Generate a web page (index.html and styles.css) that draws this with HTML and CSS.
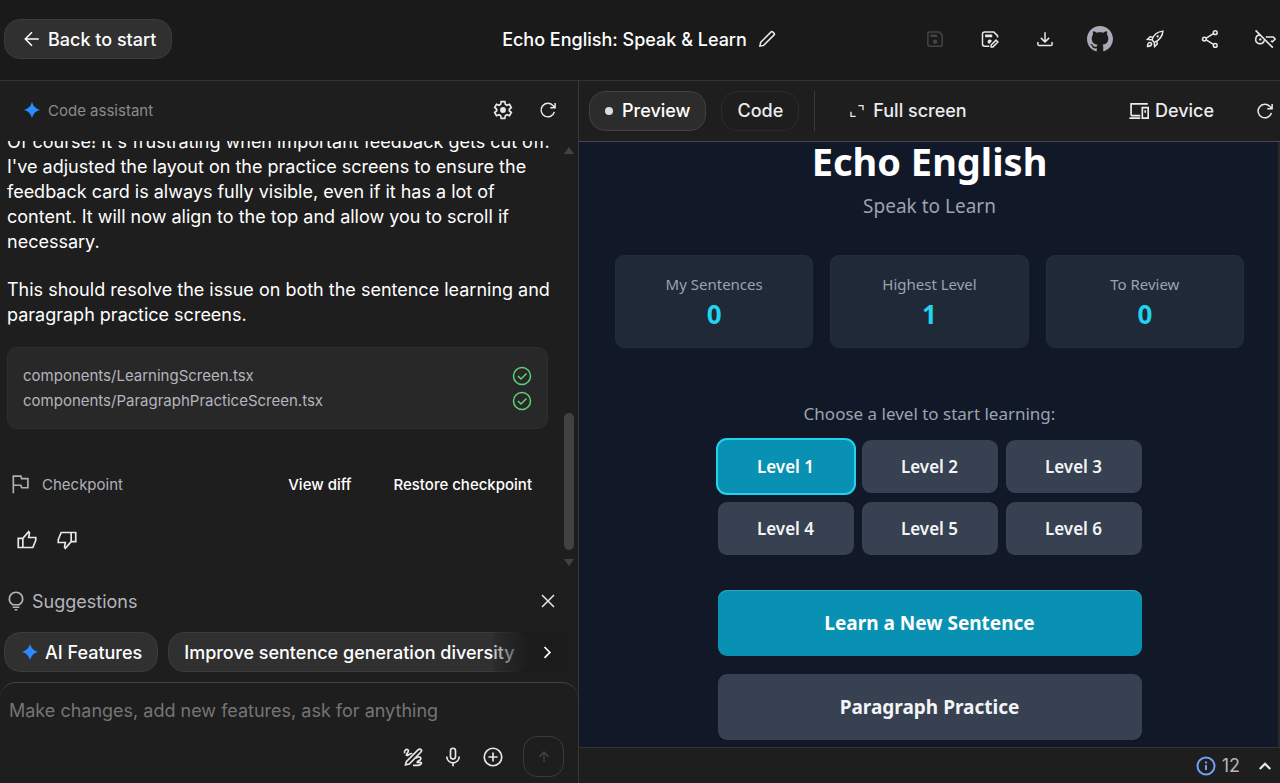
FILE: index.html
```html
<!DOCTYPE html>
<html lang="en">
<head>
    <meta charset="UTF-8">
    <meta name="viewport" content="width=device-width, initial-scale=1.0">
    <title>Echo English: Speak &amp; Learn</title>
    <link rel="stylesheet" href="styles.css">
</head>
<body>

<header class="topbar">
    <div>
        <button class="pill back" type="button">
            <svg class="icon" viewBox="0 0 24 24"><path d="M21 12H3.500M12 3l-9 9 9 9"/></svg>
            Back to start
        </button>
    </div>
    <div class="project">
        <h1>Echo English: Speak &amp; Learn</h1>
        <button class="icon-btn" type="button" aria-label="Edit name">
            <svg class="icon" viewBox="0 0 24 24"><path d="M2.500 21.500l1-5L17.500 2.500q1-1 2 0l2 2q1 1 0 2L7.500 20.500z"/></svg>
        </button>
    </div>
    <nav class="actions">
        <button class="icon-btn" type="button" aria-label="Save" disabled>
            <svg class="icon" viewBox="0 0 24 24"><path d="M5 2.500h12.500l4 4V19q0 2.500-2.500 2.500H5Q2.500 21.500 2.500 19V5Q2.500 2.500 5 2.500z"/><path class="fill" d="M6 6h9v3.500H6z"/><circle class="fill" cx="12" cy="15.500" r="3"/></svg>
        </button>
        <button class="icon-btn" type="button" aria-label="Save as">
            <svg class="icon" viewBox="0 0 24 24"><path d="M11 21.500H5Q2 21.500 2 19V5Q2 2.500 5 2.500h12l5 5V10"/><path class="fill" d="M5.500 6h9.500v3.500H5.500zM14.500 14.500a3 3 0 1 0-3.500 4z"/><path d="M13.500 22.500v-2.500l6.500-6.500 2.500 2.500-6.500 6.500z"/></svg>
        </button>
        <button class="icon-btn" type="button" aria-label="Download">
            <svg class="icon" viewBox="0 0 24 24"><path d="M12 3v12.500M6.500 10.500l5.500 5.500 5.500-5.500M2.500 16v3q0 1.800 1.800 1.800h15.400q1.800 0 1.800-1.800v-3"/></svg>
        </button>
        <button class="icon-btn github" type="button" aria-label="GitHub">
            <svg viewBox="0 0 16 16"><path d="M8 0C3.580 0 0 3.580 0 8c0 3.540 2.290 6.530 5.470 7.590.4.070.55-.17.55-.38 0-.19-.01-.82-.01-1.490-2.010.37-2.530-.49-2.690-.94-.09-.23-.48-.94-.82-1.130-.28-.15-.68-.52-.01-.53.63-.01 1.080.58 1.230.82.72 1.210 1.870.87 2.330.66.07-.52.28-.87.51-1.070-1.780-.2-3.640-.89-3.640-3.950 0-.87.31-1.590.82-2.150-.08-.2-.36-1.020.08-2.120 0 0 .67-.21 2.200.82.64-.18 1.320-.27 2-.27s1.360.09 2 .27c1.530-1.040 2.200-.82 2.200-.82.44 1.100.16 1.920.08 2.120.51.56.82 1.270.82 2.150 0 3.070-1.870 3.750-3.650 3.950.29.25.54.73.54 1.480 0 1.070-.01 1.930-.01 2.200 0 .21.15.46.55.38A8.010 8.010 0 0 0 16 8c0-4.420-3.580-8-8-8z"/></svg>
        </button>
        <button class="icon-btn" type="button" aria-label="Deploy">
            <svg class="icon" viewBox="0 0 24 24"><path d="M8 13C10 7 14 2.500 22.500 1.500 22 10 17 14 11 16.500zM9 9.500L5.500 9 2 12.500l6 .5M14.500 15l.5 3.500-3.500 3.500-.5-5.500"/><path d="M2 22q0-5 3-5.500 2.500 0 2.500 2.500Q7 21.500 2 22z"/><circle class="fill" cx="15.500" cy="8.500" r="1.500"/></svg>
        </button>
        <button class="icon-btn" type="button" aria-label="Share">
            <svg class="icon" viewBox="0 0 24 24"><path d="M7 10.800l9.500-6M7 13.200l9.500 6"/><circle cx="4.500" cy="12" r="2.500"/><circle cx="19" cy="3.500" r="2.500"/><circle cx="19" cy="20.500" r="2.500"/></svg>
        </button>
        <button class="icon-btn" type="button" aria-label="No API key">
            <svg class="icon key" viewBox="0 0 28 24"><path d="M2 1l22 22M8 7a5.500 5.500 0 1 0 5 7M15 9.500h9.500l2.500 2.500-3.500 3.500-2-1"/><circle class="fill" cx="8" cy="12.500" r="1.500"/></svg>
        </button>
    </nav>
</header>

<div class="workspace">
    <section class="assistant">
        <div class="assistant-head">
            <svg class="spark" viewBox="0 0 24 24"><path d="M12 0q2.500 9.500 12 12-9.500 2.500-12 12-2.500-9.500-12-12 9.500-2.500 12-12z"/></svg>
            <h2>Code assistant</h2>
            <button class="icon-btn" type="button" aria-label="Settings">
                <svg class="icon gear" viewBox="0 0 24 24"><path d="M9.800 2h4.400l.6 3.200 2 1.100 3-1.100 2.200 3.800-2.400 2.100v1.800l2.400 2.100-2.200 3.800-3-1.100-2 1.100-.6 3.200H9.800l-.6-3.200-2-1.100-3 1.100L2 15l2.400-2.100v-1.800L2 9l2.200-3.800 3 1.100 2-1.100z"/><circle class="fill" cx="12" cy="12" r="3.500"/></svg>
            </button>
            <button class="icon-btn" type="button" aria-label="Restart chat">
                <svg class="icon" viewBox="0 0 24 24"><path d="M20.500 14.500A9 9 0 1 1 18.500 6L21 8.500M21.500 2.500v6.500H15"/></svg>
            </button>
        </div>

        <div class="chat">
            <div class="messages">
                <p>Of course! It's frustrating when important feedback gets cut off. I've adjusted the layout on the practice screens to ensure the feedback card is always fully visible, even if it has a lot of content. It will now align to the top and allow you to scroll if necessary.</p>
                <p>This should resolve the issue on both the sentence learning and paragraph practice screens.</p>
                <ul class="files">
                    <li>components/LearningScreen.tsx
                        <svg viewBox="0 0 20 20"><circle cx="10" cy="10" r="8.500"/><path d="M6 10l3 3 5.500-5.500"/></svg>
                    </li>
                    <li>components/ParagraphPracticeScreen.tsx
                        <svg viewBox="0 0 20 20"><circle cx="10" cy="10" r="8.500"/><path d="M6 10l3 3 5.500-5.500"/></svg>
                    </li>
                </ul>
                <div class="checkpoint">
                    <svg class="icon" viewBox="0 0 24 24"><path d="M4 23V2.500h9l1 3h7.500v11H14l-1-3H4"/></svg>
                    <span>Checkpoint</span>
                    <button type="button">View diff</button>
                    <button type="button">Restore checkpoint</button>
                </div>
                <div class="feedback">
                    <button class="icon-btn" type="button" aria-label="Good response">
                        <svg class="icon" viewBox="0 0 24 24"><path d="M7 10l7-8 1 1.500L14 9h8.500v3.500L19 21H1.500V10H7v11"/></svg>
                    </button>
                    <button class="icon-btn" type="button" aria-label="Bad response">
                        <svg class="icon" viewBox="0 0 24 24"><path d="M17 14l-7 8-1-1.500 1-5.500H1.500v-3.500L5 3h17.500v11H17V3"/></svg>
                    </button>
                </div>
            </div>
            <div class="scrollbar">
                <svg viewBox="0 0 12 9"><path d="M6 1l5 7H1z"/></svg>
                <span class="thumb"></span>
                <svg viewBox="0 0 12 9"><path d="M6 8l5-7H1z"/></svg>
            </div>
        </div>

        <div class="suggestions">
            <div class="suggestions-head">
                <svg class="icon" viewBox="0 0 20 24"><path d="M6.500 16.500C3 14.500 2 12 2 9.500a8 8 0 0 1 16 0c0 2.500-1 5-4.500 7zM6 19.500h8M8.500 22.500h3"/></svg>
                <h3>Suggestions</h3>
                <button class="icon-btn" type="button" aria-label="Close suggestions">
                    <svg class="icon" viewBox="0 0 24 24"><path d="M4 4l16 16M20 4L4 20"/></svg>
                </button>
            </div>
            <div class="chips">
                <button class="pill" type="button">
                    <svg class="spark" viewBox="0 0 24 24"><path d="M12 0q2.500 9.500 12 12-9.500 2.500-12 12-2.500-9.500-12-12 9.500-2.500 12-12z"/></svg>
                    AI Features
                </button>
                <button class="pill" type="button">Improve sentence generation diversity</button>
                <button class="next" type="button" aria-label="More suggestions">
                    <svg class="icon" viewBox="0 0 24 24"><path d="M9 6l6.500 6.500L9 19"/></svg>
                </button>
            </div>
        </div>

        <form class="composer">
            <textarea rows="1" aria-label="Prompt" placeholder="Make changes, add new features, ask for anything"></textarea>
            <div class="tools">
                <button class="icon-btn" type="button" aria-label="Annotate">
                    <svg class="icon" viewBox="0 0 24 24"><path d="M3 21.500l1-4L18 3.500q2-2 4 0 .8 1-.5 2.500L7.500 20.500zM2 7.500C1 4 4 2 6 3.500s-2 5-2 6c1 2.500 5-3 7-1.500M15 13.500c4-3 7.500-1 6 1.500-1 1.500-4.500 2-4 3.500 1 1 4-1 5 .5.500 1.500-2 3-4.500 3H12"/></svg>
                </button>
                <button class="icon-btn" type="button" aria-label="Speak">
                    <svg class="icon" viewBox="0 0 24 24"><rect x="9" y="1.500" width="6" height="13" rx="3"/><path d="M4.500 11.500a7.500 7.500 0 0 0 15 0M12 19v4"/></svg>
                </button>
                <button class="icon-btn" type="button" aria-label="Add file">
                    <svg class="icon" viewBox="0 0 24 24"><circle cx="12" cy="12" r="10.500"/><path d="M12 6.500v11M6.500 12h11"/></svg>
                </button>
                <button class="send" type="submit" aria-label="Send" disabled>
                    <svg class="icon" viewBox="0 0 24 24"><path d="M12 20V5M5 11.500l7-7 7 7"/></svg>
                </button>
            </div>
        </form>
    </section>

    <section class="preview">
        <div class="preview-head">
            <button class="tab active" type="button"><span class="dot"></span>Preview</button>
            <button class="tab" type="button">Code</button>
            <span class="divider"></span>
            <button class="plain" type="button">
                <svg class="icon expand" viewBox="0 0 24 24"><path d="M14 4h7v7M3 13v7h7"/></svg>
                Full screen
            </button>
            <button class="plain device" type="button">
                <svg class="icon" viewBox="0 0 24 24"><path d="M22.500 3.500h-20v14M.5 20.500h13M2.500 17.500h11M16 8h7v12.500h-7zM19.500 11v3"/></svg>
                Device
            </button>
            <button class="icon-btn" type="button" aria-label="Reload preview">
                <svg class="icon" viewBox="0 0 24 24"><path d="M20.500 14.500A9 9 0 1 1 18.500 6L21 8.500M21.500 2.500v6.500H15"/></svg>
            </button>
        </div>

        <main class="app">
            <h2 class="app-title">Echo English</h2>
            <p class="tagline">Speak to Learn</p>
            <div class="stats">
                <div class="stat"><span>My Sentences</span><strong>0</strong></div>
                <div class="stat"><span>Highest Level</span><strong>1</strong></div>
                <div class="stat"><span>To Review</span><strong>0</strong></div>
            </div>
            <p class="choose">Choose a level to start learning:</p>
            <div class="levels">
                <button class="selected" type="button">Level 1</button>
                <button type="button">Level 2</button>
                <button type="button">Level 3</button>
                <button type="button">Level 4</button>
                <button type="button">Level 5</button>
                <button type="button">Level 6</button>
            </div>
            <div class="modes">
                <button class="primary" type="button">Learn a New Sentence</button>
                <button type="button">Paragraph Practice</button>
            </div>
        </main>

        <footer class="status">
            <svg class="info" viewBox="0 0 20 20"><circle cx="10" cy="10" r="8.500"/><path d="M10 9v5M10 5.500v2"/></svg>
            <span>12</span>
            <button class="icon-btn" type="button" aria-label="Show console">
                <svg class="icon bold" viewBox="0 0 24 24"><path d="M5 16l7-7 7 7"/></svg>
            </button>
        </footer>
    </section>
</div>

</body>
</html>
```
FILE: styles.css
```css
* {
    box-sizing: border-box;
}

body {
    margin: 0;
    height: 100vh;
    display: flex;
    flex-direction: column;
    overflow: hidden;
    background-color: #1e1e1e;
    color: #fff;
    font-family: Inter, sans-serif;
    font-size: 18px;
}

h1, h2, h3, p, ul {
    margin: 0;
    padding: 0;
    font-weight: 400;
}

button {
    padding: 0;
    border: none;
    background: none;
    color: inherit;
    font: inherit;
    cursor: pointer;
    white-space: nowrap;
}

svg {
    display: block;
    flex: none;
    width: 20px;
    height: 20px;
}

.icon {
    fill: none;
    stroke: currentColor;
    stroke-width: 2;
}

.icon .fill {
    fill: currentColor;
    stroke: none;
}

.icon.bold {
    stroke-width: 3;
}

.spark {
    width: 16px;
    height: 16px;
    fill: #2b8bff;
}

.icon-btn {
    display: flex;
    flex: none;
    align-items: center;
    justify-content: center;
    width: 30px;
    height: 30px;
    color: #e8e8e8;
}

.icon-btn .icon {
    width: 18px;
    height: 18px;
}

.icon-btn .gear {
    width: 20px;
    height: 20px;
}

.icon-btn .key {
    width: 22px;
    height: 20px;
}

.icon-btn:disabled {
    color: #444;
}

.pill {
    display: flex;
    flex: none;
    align-items: center;
    gap: 7px;
    height: 40px;
    padding: 0 15px;
    border: 1px solid #3c3c3c;
    border-radius: 16px;
    background-color: #303030;
    font-weight: 500;
}

/* top bar */
.topbar {
    display: grid;
    grid-template-columns: 1fr auto 1fr;
    align-items: center;
    flex: none;
    height: 81px;
    padding-left: 4px;
    padding-bottom: 2px;
    border-bottom: 1px solid #333;
    background-color: #1a1a1a;
}

.back {
    padding-left: 18px;
}

.back .icon {
    width: 18px;
    height: 18px;
}

.project {
    display: flex;
    align-items: center;
    gap: 5px;
}

.project h1 {
    font-size: 18px;
    font-weight: 500;
}

.actions {
    display: flex;
    align-items: center;
    justify-content: flex-end;
    gap: 25px;
}

.github svg {
    width: 26px;
    height: 26px;
    fill: #a9aab8;
}

.workspace {
    display: grid;
    grid-template-columns: 579fr 701fr;
    flex: 1;
    min-height: 0;
}

/* assistant */
.assistant {
    display: flex;
    flex-direction: column;
    min-width: 0;
    min-height: 0;
    border-right: 1px solid #383838;
}

.assistant-head {
    display: flex;
    align-items: center;
    flex: none;
    gap: 8px;
    height: 60px;
    padding: 0 15px 2px 24px;
}

.assistant-head h2 {
    flex: 1;
    color: #8b8b8b;
    font-size: 15px;
}

.assistant-head .icon-btn + .icon-btn {
    margin-left: 7px;
}

.chat {
    display: flex;
    flex: 1;
    min-height: 0;
    overflow: hidden;
}

.messages {
    display: flex;
    flex-direction: column;
    justify-content: flex-end;
    flex: 1;
    min-width: 0;
    padding: 0 12px 17px 7px;
}

.messages p {
    flex: none;
    margin-bottom: 23px;
    line-height: 25px;
}

.messages p + p {
    margin-bottom: 20px;
}

.files {
    flex: none;
    margin-right: 3px;
    padding: 15px;
    border: 1px solid #2e2e2e;
    border-radius: 10px;
    background-color: #282828;
    color: #b5b5bd;
    font-size: 15px;
    line-height: 25px;
    list-style: none;
}

.files li {
    display: flex;
    align-items: center;
    justify-content: space-between;
}

.files svg {
    fill: none;
    stroke: #5bd37a;
    stroke-width: 1.500;
}

.checkpoint {
    display: flex;
    align-items: center;
    flex: none;
    height: 30px;
    margin-top: 40px;
    padding: 0 19px 0 3px;
    color: #b0b0b8;
    font-size: 15px;
}

.checkpoint span {
    flex: 1;
    margin-left: 12px;
}

.checkpoint button {
    margin-left: 42px;
    color: #fff;
    font-weight: 500;
}

.feedback {
    display: flex;
    flex: none;
    gap: 10px;
    margin-top: 26px;
    padding-left: 5px;
}

.feedback .icon-btn .icon {
    width: 20px;
    height: 20px;
}

.scrollbar {
    display: flex;
    flex-direction: column;
    align-items: center;
    width: 12px;
    margin-right: 3px;
    padding: 5px 0;
}

.scrollbar svg {
    width: 12px;
    height: 9px;
    fill: #434343;
}

.thumb {
    width: 10px;
    height: 137px;
    margin-top: auto;
    margin-bottom: 8px;
    border-radius: 5px;
    background-color: #424242;
}

.suggestions {
    flex: none;
    padding: 14px 10px 10px 4px;
}

.suggestions-head {
    display: flex;
    align-items: center;
    gap: 6px;
    margin-bottom: 16px;
    padding: 0 5px 0 2px;
    color: #b4b5bd;
}

.suggestions-head h3 {
    flex: 1;
    font-size: 18px;
}

.chips {
    display: flex;
    gap: 10px;
    position: relative;
    overflow: hidden;
}

.chips .spark {
    margin-left: 2px;
}

/* lies over the clipped end of the chip row */
.next {
    position: absolute;
    top: 0;
    right: 0;
    bottom: 0;
    width: 75px;
    padding-left: 44px;
    background: linear-gradient(to right, rgba(27, 27, 27, 0.2), #1b1b1b 50%);
}

.composer {
    display: flex;
    flex-direction: column;
    flex: none;
    padding: 15px 14px 6px 9px;
    border-top: 1px solid #444;
    border-radius: 16px 16px 0 0;
}

.composer textarea {
    padding: 0;
    border: none;
    outline: none;
    resize: none;
    background: none;
    color: #fff;
    font: inherit;
    line-height: 26px;
}

.composer textarea::placeholder {
    color: #757575;
}

.tools {
    display: flex;
    align-items: center;
    justify-content: flex-end;
    gap: 10px;
    margin-top: 12px;
}

.tools .icon-btn .icon {
    width: 20px;
    height: 20px;
}

.send {
    display: flex;
    align-items: center;
    justify-content: center;
    width: 41px;
    height: 41px;
    margin-left: 5px;
    border: 1px solid #3b3b3b;
    border-radius: 14px;
    color: #444;
}

.send .icon {
    width: 16px;
    height: 16px;
}

/* preview */
.preview {
    display: flex;
    flex-direction: column;
    min-width: 0;
    min-height: 0;
}

.preview-head {
    display: flex;
    align-items: center;
    flex: none;
    height: 61px;
    padding-left: 10px;
    padding-bottom: 1px;
    border-bottom: 1px solid #484848;
    font-weight: 500;
}

.tab {
    display: flex;
    align-items: center;
    gap: 9px;
    height: 40px;
    margin-right: 15px;
    padding: 0 15px;
    border: 1px solid #2b2b2b;
    border-radius: 16px;
    color: #ececec;
}

.tab.active {
    border-color: #414141;
    background-color: #2c2c2c;
    color: #fff;
}

.dot {
    width: 8px;
    height: 8px;
    border-radius: 50%;
    background-color: #ddd;
}

.divider {
    width: 1px;
    height: 40px;
    margin-right: 34px;
    background-color: #3a3a3a;
}

.plain {
    display: flex;
    align-items: center;
    gap: 8px;
    color: #ececec;
}

.expand {
    width: 16px;
    height: 16px;
}

.device {
    margin-left: auto;
    margin-right: 36px;
    gap: 6px;
}

.app {
    display: flex;
    flex-direction: column;
    align-items: center;
    flex: 1;
    min-height: 0;
    padding: 0 34px 0 36px;
    border-right: 2px solid #292929;
    background-color: #111827;
    font-family: "Noto Sans", sans-serif;
}

.app-title {
    font-size: 38px;
    font-weight: 700;
    line-height: 38px;
}

.tagline {
    margin-top: 11px;
    color: #9ca3af;
    font-size: 19px;
    line-height: 30px;
}

.stats {
    display: grid;
    grid-template-columns: repeat(3, 1fr);
    gap: 17px;
    width: 100%;
    margin-top: 34px;
}

.stat {
    display: flex;
    flex-direction: column;
    align-items: center;
    gap: 3px;
    padding: 17px 0;
    border: 1px solid #232e3d;
    border-radius: 9px;
    background-color: #1f2937;
}

.stat span {
    color: #9ca3af;
    font-size: 15px;
    line-height: 22px;
}

.stat strong {
    color: #22d3ee;
    font-size: 26px;
    line-height: 32px;
}

.choose {
    margin-top: 52px;
    color: #9ca3af;
    font-size: 17px;
    line-height: 28px;
}

.levels {
    display: grid;
    grid-template-columns: repeat(3, 1fr);
    gap: 9px 8px;
    width: 100%;
    max-width: 424px;
    margin-top: 12px;
}

.levels button, .modes button {
    height: 53px;
    border-radius: 9px;
    background-color: #374151;
    color: #f3f4f6;
    font-size: 17px;
    font-weight: 600;
}

.levels .selected {
    background-color: #0891b2;
    box-shadow: 0 0 0 2px #22d3ee;
    color: #fff;
}

.modes {
    display: grid;
    gap: 18px;
    width: 100%;
    max-width: 424px;
    margin-top: 35px;
}

.modes button {
    height: 66px;
    font-size: 19px;
    font-weight: 700;
}

.modes .primary {
    background-color: #0891b2;
    box-shadow: inset 0 1px 0 #2fa5c2;
    color: #fff;
}

.status {
    display: flex;
    align-items: center;
    justify-content: flex-end;
    flex: none;
    gap: 6px;
    height: 36px;
    border-top: 1px solid #333;
    color: #b4b5bd;
}

.status .icon-btn {
    margin-left: 4px;
}

.info {
    fill: none;
    stroke: #6ea0f5;
    stroke-width: 2;
}
```
